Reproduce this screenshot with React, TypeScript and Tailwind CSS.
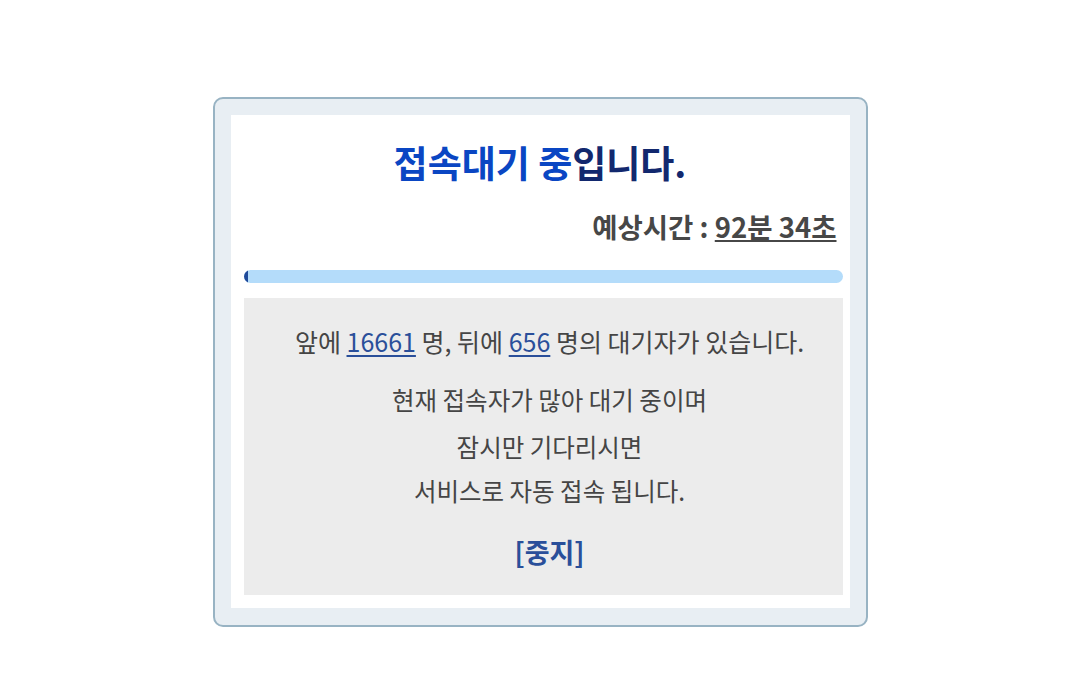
import React from "react";

export default function App() {
  const font = { fontFamily: '"Noto Sans CJK KR", "Noto Sans", sans-serif' };
  return (
    <div className="w-full min-h-[699px] bg-white pt-[97px]" style={font}>
      <div className="mx-auto w-[655px] h-[530px] rounded-[10px] border-2 border-[#98b3c3] bg-[#e8eef3] pt-[16px] px-[16px]">
        <div className="bg-white h-[493px] pt-[25px]">
          <h1 className="text-center text-[37px] leading-[44px] font-bold">
            <span className="text-[#0a46c3]">접속대기 중</span>
            <span className="text-[#12286e]">입니다.</span>
          </h1>
          <div className="mt-[24px] pr-[13px] text-right text-[27.5px] leading-[36px] font-bold text-[#474747]">
            예상시간 : <span className="underline underline-offset-[2px] decoration-[2px]">92분 34초</span>
          </div>
          <div className="ml-[13px] mt-[26px] h-[13px] w-[599px] rounded-full bg-[#b4dcfa] overflow-hidden">
            <div className="h-full w-[4px] bg-[#1f4a9a]" />
          </div>
          <div className="ml-[13px] mt-[15px] w-[599px] h-[297px] bg-[#ececec] pt-[21px] pl-[13px] text-center text-[#454545] text-[24.5px]">
            <p className="leading-[44px] text-[25px]">
              앞에{" "}
              <span className="text-[#2a4f9a] underline underline-offset-[3px] decoration-[2px]">16661</span>{" "}
              명, 뒤에{" "}
              <span className="text-[#2a4f9a] underline underline-offset-[3px] decoration-[2px]">656</span>{" "}
              명의 대기자가 있습니다.
            </p>
            <p className="mt-[15px] leading-[44px]">현재 접속자가 많아 대기 중이며</p>
            <p className="mt-[3px] leading-[44px]">
              잠시만 기다리시면
              <br />
              서비스로 자동 접속 됩니다.
            </p>
            <div className="mt-[17px] leading-[44px] text-[27px] font-bold text-[#2a4f9a]">[중지]</div>
          </div>
        </div>
      </div>
    </div>
  );
}
